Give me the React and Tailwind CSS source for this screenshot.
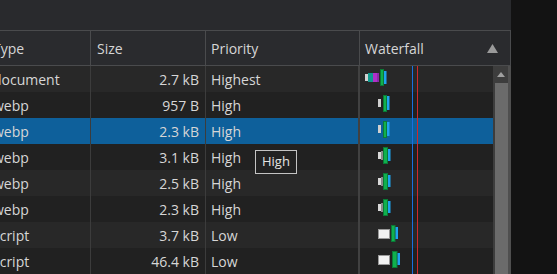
import React from "react";

const rows = [
  { type: "document", size: "2.7 kB", pri: "Highest", bars: "doc" },
  { type: "webp", size: "957 B", pri: "High", bars: "img1" },
  { type: "webp", size: "2.3 kB", pri: "High", bars: "img1", sel: true },
  { type: "webp", size: "3.1 kB", pri: "High", bars: "img2" },
  { type: "webp", size: "2.5 kB", pri: "High", bars: "img2" },
  { type: "webp", size: "2.3 kB", pri: "High", bars: "img2" },
  { type: "script", size: "3.7 kB", pri: "Low", bars: "s1" },
  { type: "script", size: "46.4 kB", pri: "Low", bars: "s2" },
];

function Green({ x, w }) {
  return <rect x={x + 0.5} y={3.5} width={w - 1} height={16} fill="#10b04e" stroke="#0a7a36" />;
}

function Bars({ kind }) {
  return (
    <svg width="132" height="26" className="block">
      {kind === "doc" && (
        <>
          <rect x="5" y="8" width="3" height="7" fill="#d0d0d0" />
          <rect x="8" y="7" width="5" height="9" fill="#0f9a8e" />
          <rect x="13" y="7" width="4" height="9" fill="#b030c8" />
          <rect x="17" y="7" width="2" height="9" fill="#8a2aa8" />
          <Green x={20} w={4} />
          <rect x="24" y="5" width="2.5" height="13" fill="#1ea4ee" />
        </>
      )}
      {kind === "img1" && (
        <>
          <rect x="18" y="7" width="3" height="8" fill="#cfcfcf" />
          <Green x={23} w={4} />
          <rect x="27" y="4" width="2.5" height="14" fill="#1ea4ee" />
        </>
      )}
      {kind === "img2" && (
        <>
          <rect x="18" y="8" width="3" height="7" fill="#d8d8d8" />
          <rect x="21" y="7" width="2" height="9" fill="#8a8a8a" />
          <Green x={23} w={5} />
          <rect x="28" y="5" width="2.5" height="12" fill="#1ea4ee" />
        </>
      )}
      {kind === "s1" && (
        <>
          <rect x="18.5" y="7.5" width="11" height="9" fill="#f2f2f2" stroke="#9a9a9a" />
          <Green x={31} w={4.5} />
          <rect x="35.5" y="5" width="2.5" height="12" fill="#1ea4ee" />
        </>
      )}
      {kind === "s2" && (
        <>
          <rect x="18.5" y="7.5" width="11" height="9" fill="#f2f2f2" stroke="#9a9a9a" />
          <Green x={32} w={5.5} />
          <rect x="37.5" y="5" width="2.5" height="12" fill="#1ea4ee" />
        </>
      )}
    </svg>
  );
}

export default function App() {
  return (
    <div
      className="w-[557px] h-[274px] bg-[#131313] flex overflow-hidden text-[14px] text-[#d6d6d6]"
      style={{ fontFamily: '"Open Sans", "Noto Sans", sans-serif' }}
    >
      <div className="w-[511px] flex flex-col overflow-hidden">
        <div className="h-[30px] bg-[#292a2d] shrink-0" />
        <div className="relative flex-1 overflow-hidden">
          {/* header */}
          <div className="flex h-[36px] bg-[#2a2b2e] border-y border-[#4a4b4d] ml-[-13px] w-[524px]">
            <div className="w-[104px] border-r border-[#4a4b4d] flex items-center pl-[6px]">Type</div>
            <div className="w-[115px] border-r border-[#4a4b4d] flex items-center pl-[6px]">Size</div>
            <div className="w-[154px] border-r border-[#4a4b4d] flex items-center pl-[5px]">Priority</div>
            <div className="w-[151px] border-r border-[#4a4b4d] flex items-center pl-[5px] pr-[12px] justify-between">
              <span>Waterfall</span>
              <svg width="11" height="9" viewBox="0 0 11 9">
                <polygon points="5.5,0 11,9 0,9" fill="#9a9a9a" />
              </svg>
            </div>
          </div>
          {/* body */}
          <div className="flex h-[208px]">
            <div className="w-[506px] ml-[-13px] flex flex-col">
              {rows.map((r, i) => (
                <div
                  key={i}
                  className={
                    "flex h-[26px] shrink-0 " +
                    (r.sel ? "bg-[#0e609b]" : i % 2 === 0 ? "bg-[#282828]" : "bg-[#212121]")
                  }
                >
                  <div className="w-[104px] border-r border-[#3c3c3c] flex items-center pl-[6px] whitespace-nowrap">{r.type}</div>
                  <div className="w-[115px] border-r border-[#3c3c3c] flex items-center justify-end pr-[6px] whitespace-nowrap">{r.size}</div>
                  <div className="w-[154px] border-r-2 border-[#414141] flex items-center pl-[5px] whitespace-nowrap">{r.pri}</div>
                  <div className="flex-1 flex items-center">
                    <Bars kind={r.bars} />
                  </div>
                </div>
              ))}
            </div>
            {/* scrollbar */}
            <div className="w-[18px] h-full flex bg-[#3d3d3d]">
              <div className="w-[15px] flex flex-col items-center">
                <div className="h-[17px] w-full flex items-center justify-center">
                  <svg width="8" height="5" viewBox="0 0 8 5">
                    <polygon points="4,0 8,5 0,5" fill="#a0a0a0" />
                  </svg>
                </div>
                <div className="w-[13px] ml-[2px] flex-1 bg-[#6b6b6b]" />
              </div>
              <div className="w-[3px] bg-[#4f4f4f]" />
            </div>
          </div>
          {/* waterfall timing lines */}
          <svg className="absolute z-10 left-[410px] top-[36px]" width="10" height="208">
            <rect x="2" y="0" width="1" height="208" fill="#1a6fe0" />
            <rect x="7" y="0" width="1" height="208" fill="#d0282d" />
          </svg>
          {/* tooltip */}
          <div className="absolute z-20 left-[255px] top-[120px] w-[42px] h-[24px] bg-[#222222] border border-[#c4c4c4] flex items-center pl-[6px] text-[13px] text-[#e4e4e4]">
            High
          </div>
        </div>
      </div>
    </div>
  );
}
